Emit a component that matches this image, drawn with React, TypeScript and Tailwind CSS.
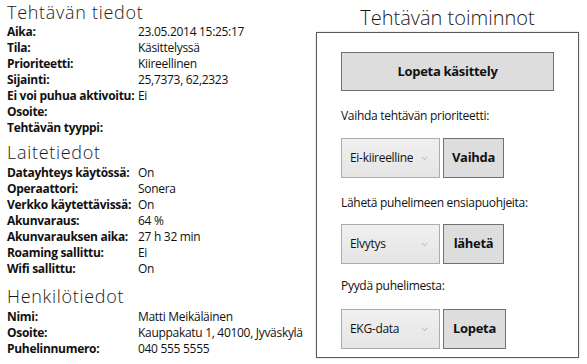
import { ChevronDown } from 'lucide-react'

interface Row {
  label: string
  value: string
}

const tehtava: Row[] = [
  { label: 'Aika:', value: '23.05.2014 15:25:17' },
  { label: 'Tila:', value: 'Käsittelyssä' },
  { label: 'Prioriteetti:', value: 'Kiireellinen' },
  { label: 'Sijainti:', value: '25,7373, 62,2323' },
  { label: 'Ei voi puhua aktivoitu:', value: 'Ei' },
  { label: 'Osoite:', value: '' },
  { label: 'Tehtävän tyyppi:', value: '' },
]

const laite: Row[] = [
  { label: 'Datayhteys käytössä:', value: 'On' },
  { label: 'Operaattori:', value: 'Sonera' },
  { label: 'Verkko käytettävissä:', value: 'On' },
  { label: 'Akunvaraus:', value: '64 %' },
  { label: 'Akunvarauksen aika:', value: '27 h 32 min' },
  { label: 'Roaming sallittu:', value: 'Ei' },
  { label: 'Wifi sallittu:', value: 'On' },
]

const henkilo: Row[] = [
  { label: 'Nimi:', value: 'Matti Meikäläinen' },
  { label: 'Osoite:', value: 'Kauppakatu 1, 40100, Jyväskylä' },
  { label: 'Puhelinnumero:', value: '040 555 5555' },
]

function Section({ title, rows, className }: { title: string; rows: Row[]; className: string }) {
  return (
    <section>
      <h2 className={`text-[18px] font-light tracking-[0.7px] text-[#1a1a1a] ${className}`}>{title}</h2>
      {rows.map((r) => (
        <div key={r.label} className="flex h-[16px] text-[12px] leading-[16px] whitespace-nowrap">
          <span className="w-[131px] shrink-0 font-bold">{r.label}</span>
          <span>{r.value}</span>
        </div>
      ))}
    </section>
  )
}

function Picker({ value, action, wide }: { value: string; action: string; wide?: boolean }) {
  return (
    <div className="flex gap-[3px]">
      <div className="flex h-[40px] w-[99px] items-center justify-between border border-[#acacac] bg-gradient-to-b from-[#f0f0f0] to-[#e5e5e5] pl-[8px] pr-[10px] text-[12px]">
        <span className="overflow-hidden whitespace-nowrap">{value}</span>
        <ChevronDown className="h-[9px] w-[9px] shrink-0 text-[#999]" strokeWidth={2} />
      </div>
      <button
        type="button"
        className={`h-[40px] ${wide ? 'w-[63px]' : 'w-[61px]'} border border-[#707070] bg-[#dddddd] text-[13px] font-bold`}
      >
        {action}
      </button>
    </div>
  )
}

export default function App() {
  return (
    <div
      className="flex h-[364px] w-[587px] overflow-hidden bg-white tracking-[-0.3px] text-[#111]"
      style={{ fontFamily: '"Open Sans", "Noto Sans", sans-serif' }}
    >
      <div className="w-[305px] shrink-0 pl-[7px]">
        <Section title="Tehtävän tiedot" rows={tehtava} className="h-[24px] leading-[24px]" />
        <Section title="Laitetiedot" rows={laite} className="mt-[4px] h-[25px] leading-[25px]" />
        <Section title="Henkilötiedot" rows={henkilo} className="mt-[7px] h-[25px] leading-[25px]" />
      </div>

      <div className="ml-auto mr-[8px] flex w-[263px] flex-col">
        <h1 className="mt-[4px] h-[28px] text-center text-[20px] leading-[28px] font-light tracking-normal text-[#1a1a1a]">
          Tehtävän toiminnot
        </h1>
        <div className="border border-[#5a5a5a] px-[24px] pt-[19px] pb-[8px] shadow-[0_0_2px_rgba(0,0,0,0.2)]">
          <button
            type="button"
            className="h-[39px] w-full border border-[#707070] bg-[#dddddd] text-[13px] font-bold"
          >
            Lopeta käsittely
          </button>

          <p className="mt-[17px] mb-[14px] h-[16px] text-[12px] leading-[16px]">Vaihda tehtävän prioriteetti:</p>
          <Picker value="Ei-kiireelline" action="Vaihda" />

          <p className="mt-[17px] mb-[13px] h-[16px] text-[12px] leading-[16px]">Lähetä puhelimeen ensiapuohjeita:</p>
          <Picker value="Elvytys" action="lähetä" />

          <p className="mt-[14px] mb-[15px] h-[16px] text-[12px] leading-[16px]">Pyydä puhelimesta:</p>
          <Picker value="EKG-data" action="Lopeta" wide />
        </div>
      </div>
    </div>
  )
}
